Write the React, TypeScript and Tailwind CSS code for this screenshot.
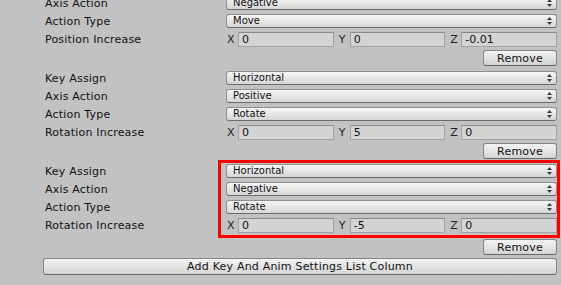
import React from "react";

function Arrows() {
  return (
    <svg width="5" height="8" viewBox="0 0 5 8" className="shrink-0">
      <path d="M2.5 0 L5 3 L0 3 Z" fill="#3a3a3a" />
      <path d="M0 5 L5 5 L2.5 8 Z" fill="#3a3a3a" />
    </svg>
  );
}

function Dropdown({ value }: { value: string }) {
  return (
    <div className="flex h-[14px] w-full items-center justify-between rounded-[3px] border border-[#8e8e8e] border-b-[#6c6c6c] bg-linear-to-b from-[#f6f6f6] to-[#d6d6d6] pl-[6px] pr-[4px] text-[10px] leading-none text-[#111]">
      <span>{value}</span>
      <Arrows />
    </div>
  );
}

function Field({ axis, value }: { axis: string; value: string }) {
  return (
    <div className="flex items-center">
      <span className="w-[12px] shrink-0 pl-[1px] text-[11px] leading-none text-[#222]">{axis}</span>
      <div className="flex h-[15px] flex-1 items-center border border-[#a2a2a2] border-t-[#8a8a8a] bg-[#d4d4d4] pl-[3px] text-[11px] leading-none text-[#111]">
        {value}
      </div>
    </div>
  );
}

function Vec({ x, y, z }: { x: string; y: string; z: string }) {
  return (
    <div className="grid w-full grid-cols-3 gap-[4px]">
      <Field axis="X" value={x} />
      <Field axis="Y" value={y} />
      <Field axis="Z" value={z} />
    </div>
  );
}

function Row({ label, children }: { label: string; children: React.ReactNode }) {
  return (
    <div className="flex h-[18px] items-center">
      <div className="w-[226px] shrink-0 pl-[45px] text-[11px] leading-none tracking-[0.2px] text-[#111]">{label}</div>
      <div className="w-[331px] shrink-0">{children}</div>
    </div>
  );
}

function Button({ label, className }: { label: string; className: string }) {
  return (
    <div
      className={
        "flex items-center justify-center rounded-[3px] border border-[#858585] border-b-[#666] bg-linear-to-b from-[#f4f4f4] to-[#d4d4d4] text-[11px] leading-none tracking-[0.2px] text-[#111] " +
        className
      }
    >
      {label}
    </div>
  );
}

function RemoveRow() {
  return (
    <div className="flex h-[18px] items-start justify-end pr-[4px] pt-[2px]">
      <Button label="Remove" className="h-[16px] w-[74px]" />
    </div>
  );
}

type G = {
  key: string;
  axis: string;
  type: string;
  incLabel: string;
  v: [string, string, string];
};

const groups: G[] = [
  { key: "Horizontal", axis: "Negative", type: "Move", incLabel: "Position Increase", v: ["0", "0", "-0.01"] },
  { key: "Horizontal", axis: "Positive", type: "Rotate", incLabel: "Rotation Increase", v: ["0", "5", "0"] },
  { key: "Horizontal", axis: "Negative", type: "Rotate", incLabel: "Rotation Increase", v: ["0", "-5", "0"] },
];

export default function App() {
  return (
    <div className="relative h-[285px] w-[561px] overflow-hidden bg-[#c2c2c2] font-['DejaVu_Sans',sans-serif]">
      <div className="mt-[-24px] flex flex-col gap-[3px]">
        {groups.map((g, i) => (
          <div key={i} className="relative flex flex-col">
            <div className={i === 2 ? "relative flex flex-col pb-[3px]" : "flex flex-col"}>
              <Row label="Key Assign">
                <Dropdown value={g.key} />
              </Row>
              <Row label="Axis Action">
                <Dropdown value={g.axis} />
              </Row>
              <Row label="Action Type">
                <Dropdown value={g.type} />
              </Row>
              <Row label={g.incLabel}>
                <Vec x={g.v[0]} y={g.v[1]} z={g.v[2]} />
              </Row>
              {i === 2 && (
                <div className="pointer-events-none absolute left-[218px] top-[-2px] h-[78px] w-[342px] border-[3px] border-[#ff0000]" />
              )}
            </div>
            <RemoveRow />
          </div>
        ))}
        <div className="pl-[43px]">
          <Button label="Add Key And Anim Settings List Column" className="h-[17px] w-[514px]" />
        </div>
      </div>
    </div>
  );
}
